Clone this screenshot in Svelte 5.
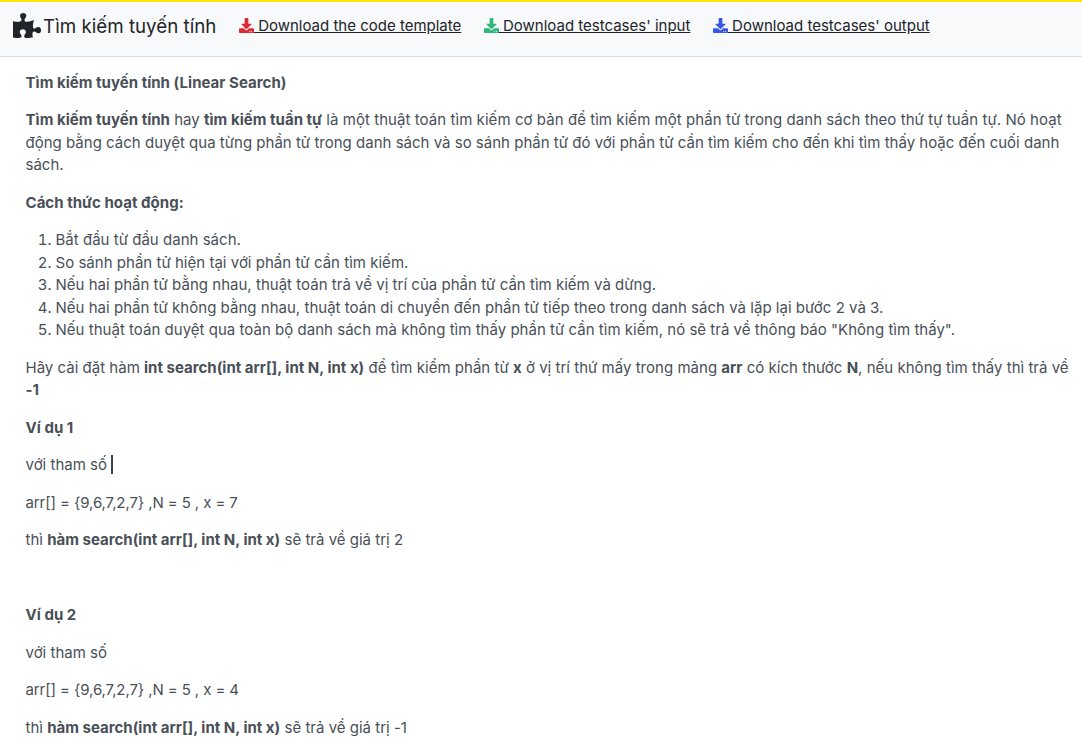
<script>
  const downloads = [
    { label: 'Download the code template', color: '#dc2b34' },
    { label: "Download testcases' input", color: '#2eb87c' },
    { label: "Download testcases' output", color: '#3558e6' },
  ];
  const steps = [
    'Bắt đầu từ đầu danh sách.',
    'So sánh phần tử hiện tại với phần tử cần tìm kiếm.',
    'Nếu hai phần tử bằng nhau, thuật toán trả về vị trí của phần tử cần tìm kiếm và dừng.',
    'Nếu hai phần tử không bằng nhau, thuật toán di chuyển đến phần tử tiếp theo trong danh sách và lặp lại bước 2 và 3.',
    'Nếu thuật toán duyệt qua toàn bộ danh sách mà không tìm thấy phần tử cần tìm kiếm, nó sẽ trả về thông báo "Không tìm thấy".',
  ];
</script>

<header>
  <svg class="puzzle" viewBox="0 0 576 512"><path fill="currentColor" d="M519.442 288.651c-41.519 0-59.5 31.593-82.058 31.593C377.409 320.244 432 144 432 144s-196.288 80-196.288-3.297c0-35.827 36.288-46.25 36.288-85.985C272 19.216 243.885 0 210.539 0c-34.654 0-66.366 18.891-66.366 56.346 0 41.364 31.711 59.277 31.711 81.75C175.885 207.719 0 166.758 0 166.758v333.237s178.635 41.047 178.635-28.662c0-22.473-40-40.107-40-81.471 0-37.456 29.25-56.346 63.577-56.346 33.673 0 61.788 19.216 61.788 54.717 0 39.735-36.288 50.158-36.288 85.985 0 60.803 129.675 25.73 181.23 25.73 0 0-34.725-120.101 25.827-120.101 35.962 0 46.423 36.152 86.308 36.152C556.712 416 576 387.99 576 354.443c0-34.199-18.962-65.792-56.558-65.792z" /></svg>
  <h1>Tìm kiếm tuyến tính</h1>
  <nav>
    {#each downloads as d}
      <a href="#download">
        <svg viewBox="0 0 512 512" style="color: {d.color}"><path fill="currentColor" d="M216 0h80c13.3 0 24 10.7 24 24v168h87.7c17.8 0 26.7 21.5 14.1 34.1L269.7 378.3c-7.5 7.5-19.8 7.5-27.3 0L90.1 226.1c-12.6-12.6-3.7-34.1 14.1-34.1H192V24c0-13.3 10.7-24 24-24zm296 376v112c0 13.3-10.7 24-24 24H24c-13.3 0-24-10.7-24-24V376c0-13.3 10.7-24 24-24h146.7l49 49c20.1 20.1 52.5 20.1 72.6 0l49-49H488c13.3 0 24 10.7 24 24zm-124 88c0-11-9-20-20-20s-20 9-20 20 9 20 20 20 20-9 20-20zm64 0c0-11-9-20-20-20s-20 9-20 20 9 20 20 20 20-9 20-20z" /></svg><span>&nbsp;{d.label}</span>
      </a>
    {/each}
  </nav>
</header>

<main>
  <p><strong>Tìm kiếm tuyến tính (Linear Search)</strong></p>
  <p><strong>Tìm kiếm tuyến tính</strong> hay <strong>tìm kiếm tuần tự</strong> <span class="loose">là một thuật toán tìm kiếm cơ bản để tìm kiếm một phần tử trong danh sách theo thứ tự tuần tự. Nó hoạt</span><br />động bằng cách duyệt qua từng phần tử trong danh sách và so sánh phần tử đó với phần tử cần tìm kiếm cho đến khi tìm thấy hoặc đến cuối danh<br />sách.</p>
  <p><strong>Cách thức hoạt động:</strong></p>
  <ol>
    {#each steps as step}<li>{step}</li>{/each}
  </ol>
  <p>Hãy cài đặt hàm <strong class="code">int search(int arr[], int N, int x)</strong> <span class="list-pace">để tìm kiểm phần từ <strong>x</strong> ở vị trí thứ mấy trong mảng <strong>arr</strong> có kích thước <strong>N</strong>, nếu không tìm thấy thì trả về</span><br /><strong>-1</strong></p>
  <p><strong>Ví dụ 1</strong></p>
  <p class="caret-line">với tham số<i class="caret"></i></p>
  <p class="values">arr[] = &#123;9,6,7,2,7&#125; ,N = 5 , x = 7</p>
  <p>thì <strong class="code">hàm search(int arr[], int N, int x)</strong> sẽ trả về giá trị 2</p>
  <p>&nbsp;</p>
  <p><strong>Ví dụ 2</strong></p>
  <p>với tham số</p>
  <p class="values">arr[] = &#123;9,6,7,2,7&#125; ,N = 5 , x = 4</p>
  <p>thì <strong class="code">hàm search(int arr[], int N, int x)</strong> sẽ trả về giá trị -1</p>
</main>

<style>
  :global(body) {
    background: #fff;
    font-family: Inter, sans-serif;
    overflow: hidden;
  }
  header {
    box-sizing: border-box;
    display: flex;
    align-items: center;
    height: 57px;
    padding: 0 12.5px 5px;
    border-top: 2px solid #ffe900;
    border-bottom: 1px solid #dcdfe3;
    background: #f8f9fb;
    color: #212529;
    white-space: nowrap;
  }
  .puzzle {
    width: 28.1px;
    height: 25px;
    margin-bottom: 2px;
  }
  h1 {
    margin: 0 0 0 2.5px;
    font-size: 18.75px;
    font-weight: 400;
    line-height: 28px;
  }
  nav {
    display: flex;
    gap: 22.5px;
    margin-left: 22.5px;
    padding-bottom: 1px;
  }
  nav a {
    display: flex;
    align-items: center;
    color: inherit;
    font-size: 15px;
    line-height: 22.5px;
    text-decoration: none;
  }
  nav svg {
    width: 15px;
    height: 15px;
    margin-bottom: 1.5px;
  }
  nav span {
    text-decoration: underline;
  }
  main {
    padding: 14.5px 0 0 25.5px;
    color: #495057;
    font-size: 15px;
    line-height: 22.5px;
    letter-spacing: 0.01px;
    white-space: nowrap;
  }
  p {
    margin: 0 0 15px;
  }
  strong {
    font-weight: 700;
    letter-spacing: 0.03px;
  }
  .code {
    letter-spacing: 0.01px;
  }
  .loose {
    letter-spacing: 0.06px;
  }
  .list-pace {
    letter-spacing: 0.022px;
  }
  .values {
    letter-spacing: -0.1px;
  }
  ol {
    margin: 0 0 15px;
    padding-left: 30px;
    letter-spacing: 0.022px;
  }
  .caret-line {
    display: flex;
    align-items: center;
  }
  .caret {
    width: 2px;
    height: 19px;
    margin: -1px 0 0 3.5px;
    background: #3c4248;
  }
</style>
